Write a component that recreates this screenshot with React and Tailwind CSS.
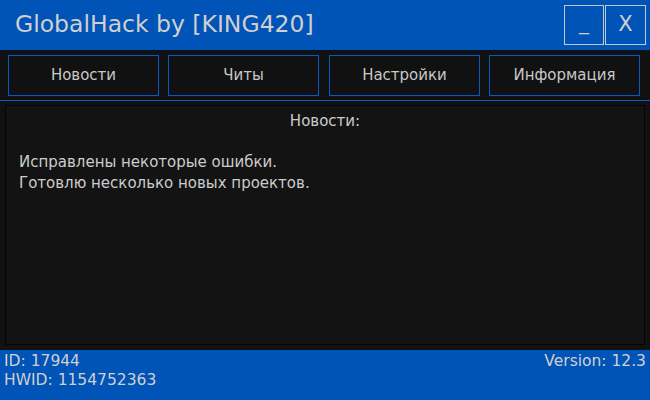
import React from 'react';

const tabs = ['Новости', 'Читы', 'Настройки', 'Информация'];

const App = () => {
  return (
    <div
      className="w-[650px] h-[400px] flex flex-col bg-[#111111] text-[#cccccc] overflow-hidden"
      style={{ fontFamily: '"DejaVu Sans", Verdana, sans-serif' }}
    >
      <div className="h-[50px] bg-[#0053b7] flex items-center justify-between pl-[15px] pr-[4px]">
        <span className="text-[23.5px] leading-none text-[#d0d0d0]">GlobalHack by [KING420]</span>
        <div className="flex gap-[1px]">
          <button className="w-[40px] h-[40px] border border-[#c8c8c8] text-[#d0d0d0] text-[20px] flex items-center justify-center pb-1">
            _
          </button>
          <button className="w-[41px] h-[40px] border border-[#c8c8c8] text-[#d0d0d0] text-[21px] flex items-center justify-center">
            X
          </button>
        </div>
      </div>

      <div className="flex gap-[9px] pl-[8px] pt-[5px] h-[50px]">
        {tabs.map((t, i) => (
          <button
            key={t}
            className={`w-[151px] h-[41px] border border-[#0a58c8] bg-[#111111] text-[15px] text-[#c8c8c8] flex items-center justify-center ${i === 2 ? 'ml-[1px]' : ''}`}
          >
            {t}
          </button>
        ))}
      </div>

      <div className="h-[1px] bg-[#0a5ccc]" />

      <div className="flex-1 px-[5px] pt-[4px] pb-[5px]">
        <div className="h-full border border-[#050505] bg-[#131313] flex flex-col">
          <div className="text-center text-[15px] leading-[20px] pt-[5px]">Новости:</div>
          <div className="pl-[13px] pt-[21px] text-[15px] leading-[20.5px]">
            <div>Исправлены некоторые ошибки.</div>
            <div>Готовлю несколько новых проектов.</div>
          </div>
        </div>
      </div>

      <div className="h-[50px] bg-[#0053b7] flex justify-between px-[4px] pt-[2px] text-[15.5px] text-[#d0d0d0] leading-[19px]">
        <div>
          <div>ID: 17944</div>
          <div>HWID: 1154752363</div>
        </div>
        <div>Version: 12.3</div>
      </div>
    </div>
  );
};

export default App;
